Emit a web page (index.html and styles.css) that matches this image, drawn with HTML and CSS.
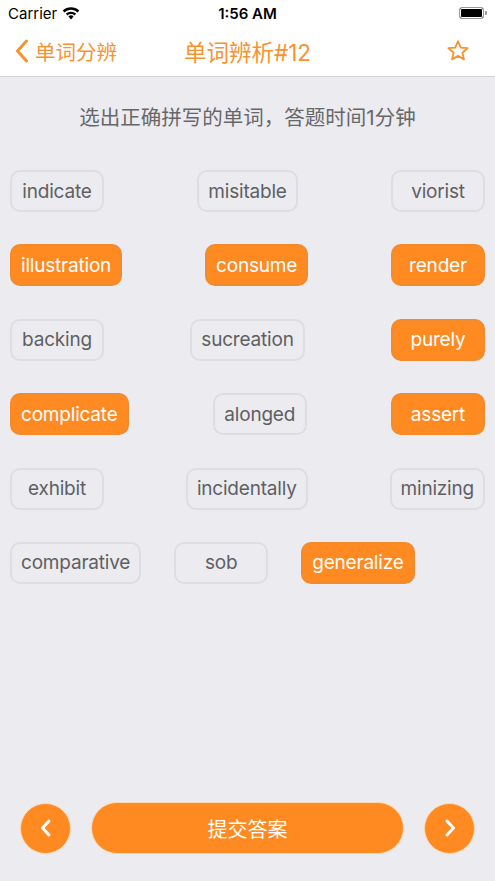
FILE: index.html
```html
<!DOCTYPE html>
<html>
<head>
    <meta charset="utf-8" />
    <title>单词辨析</title>
    <link rel="stylesheet" href="styles.css">
</head>
<body>
    <div class="status">
        <div class="carrier">Carrier
            <svg width="18" height="13" viewBox="0 0 18 13"><path d="M9 12.5l2.6-3.1a4 4 0 0 0-5.2 0z" fill="#000"/><path d="M3.9 6.6a7.6 7.6 0 0 1 10.2 0l-1.5 1.8a5.3 5.3 0 0 0-7.2 0z" fill="#000"/><path d="M0.8 3.6a12 12 0 0 1 16.4 0l-1.5 1.8a9.7 9.7 0 0 0-13.4 0z" fill="#000"/></svg>
        </div>
        <div class="time">1:56 AM</div>
        <div class="battery"><span class="cell"></span><span class="nub"></span></div>
    </div>

    <div class="navbar">
        <div class="back">
            <svg width="14" height="24" viewBox="0 0 14 24"><path d="M11.5 2L2.5 12l9 10" fill="none" stroke="#f7932f" stroke-width="3" stroke-linecap="round" stroke-linejoin="round"/></svg>
            <span>单词分辨</span>
        </div>
        <div class="title">单词辨析#12</div>
        <div class="star">
            <svg width="24" height="24" viewBox="0 0 24 24"><path d="M12 2.3l2.8 6.3 6.8.6-5.2 4.5 1.6 6.7L12 16.9l-6 3.5 1.6-6.7-5.2-4.5 6.8-.6z" fill="none" stroke="#f7932f" stroke-width="1.8" stroke-linejoin="round"/></svg>
        </div>
    </div>

    <div class="main">
        <p class="tip">选出正确拼写的单词，答题时间1分钟</p>
        <div class="words">
            <div class="row">
                <span class="chip">indicate</span>
                <span class="chip">misitable</span>
                <span class="chip">viorist</span>
            </div>
            <div class="row">
                <span class="chip on">illustration</span>
                <span class="chip on">consume</span>
                <span class="chip on">render</span>
            </div>
            <div class="row">
                <span class="chip">backing</span>
                <span class="chip">sucreation</span>
                <span class="chip on">purely</span>
            </div>
            <div class="row">
                <span class="chip on">complicate</span>
                <span class="chip">alonged</span>
                <span class="chip on">assert</span>
            </div>
            <div class="row">
                <span class="chip">exhibit</span>
                <span class="chip">incidentally</span>
                <span class="chip">minizing</span>
            </div>
            <div class="row last">
                <span class="chip">comparative</span>
                <span class="chip">sob</span>
                <span class="chip on">generalize</span>
            </div>
        </div>
    </div>

    <div class="footer">
        <div class="round">
            <svg width="16" height="20" viewBox="0 0 16 20"><path d="M11 3L4.5 10 11 17" fill="none" stroke="#fff" stroke-width="3" stroke-linecap="round" stroke-linejoin="round"/></svg>
        </div>
        <div class="submit">提交答案</div>
        <div class="round">
            <svg width="16" height="20" viewBox="0 0 16 20"><path d="M5 3l6.5 7L5 17" fill="none" stroke="#fff" stroke-width="3" stroke-linecap="round" stroke-linejoin="round"/></svg>
        </div>
    </div>
</body>
</html>
```

FILE: styles.css
```css
* {margin: 0;padding: 0;box-sizing: border-box;}
html, body {height: 100%;}
body {font-family: Inter, "Noto Sans CJK SC", sans-serif;background: #ebebf0;display: flex;flex-direction: column;}

/* status bar */
.status {background: #fff;height: 26px;display: flex;align-items: center;justify-content: space-between;padding: 0 8px;font-size: 15px;color: #000;position: relative;}
.carrier {display: flex;align-items: center;gap: 5px;}
.time {font-weight: 600;position: absolute;left: 0;right: 0;text-align: center;}
.battery {display: flex;align-items: center;gap: 1px;}
.battery .cell {width: 25px;height: 12px;border: 1px solid #999;border-radius: 3px;background: #000;box-shadow: inset 0 0 0 1px #fff;}
.battery .nub {width: 2px;height: 4px;background: #999;border-radius: 0 1px 1px 0;}

/* nav */
.navbar {background: #fff;height: 51px;border-bottom: 1px solid #d6d6da;display: flex;align-items: center;justify-content: space-between;padding: 0 25px 0 15px;color: #f7932f;position: relative;}
.back {display: flex;align-items: center;gap: 6px;font-size: 20.5px;}
.title {position: absolute;left: 0;right: 0;text-align: center;font-size: 22.5px;pointer-events: none;}
.star {display: flex;}

/* content */
.main {flex: 1;padding: 0 10px;}
.tip {text-align: center;font-size: 20.5px;color: #67676b;margin: 24px 0 39px;}
.words {display: flex;flex-direction: column;gap: 32.4px;}
.row {display: flex;justify-content: space-between;}
.row.last {justify-content: flex-start;gap: 33px;}
.chip {min-width: 94px;height: 42px;padding: 0 9px;border: 2px solid #dedee2;border-radius: 10px;display: flex;align-items: center;justify-content: center;font-size: 19px;color: #5f5f63;letter-spacing: -0.2px;}
.chip.on {background: #ff8a22;border-color: #f28a2e;color: #fff;}

/* bottom bar */
.footer {display: flex;align-items: center;justify-content: space-between;padding: 0 20px;height: 54px;margin-bottom: 26px;}
.round {width: 51px;height: 51px;border-radius: 50%;background: #ff8a22;border: 1px solid #fcd9b8;display: flex;align-items: center;justify-content: center;}
.submit {width: 313px;height: 52px;border-radius: 26px;background: #ff8a22;border: 1px solid #fcd9b8;color: #fff;font-size: 20px;display: flex;align-items: center;justify-content: center;}
```
